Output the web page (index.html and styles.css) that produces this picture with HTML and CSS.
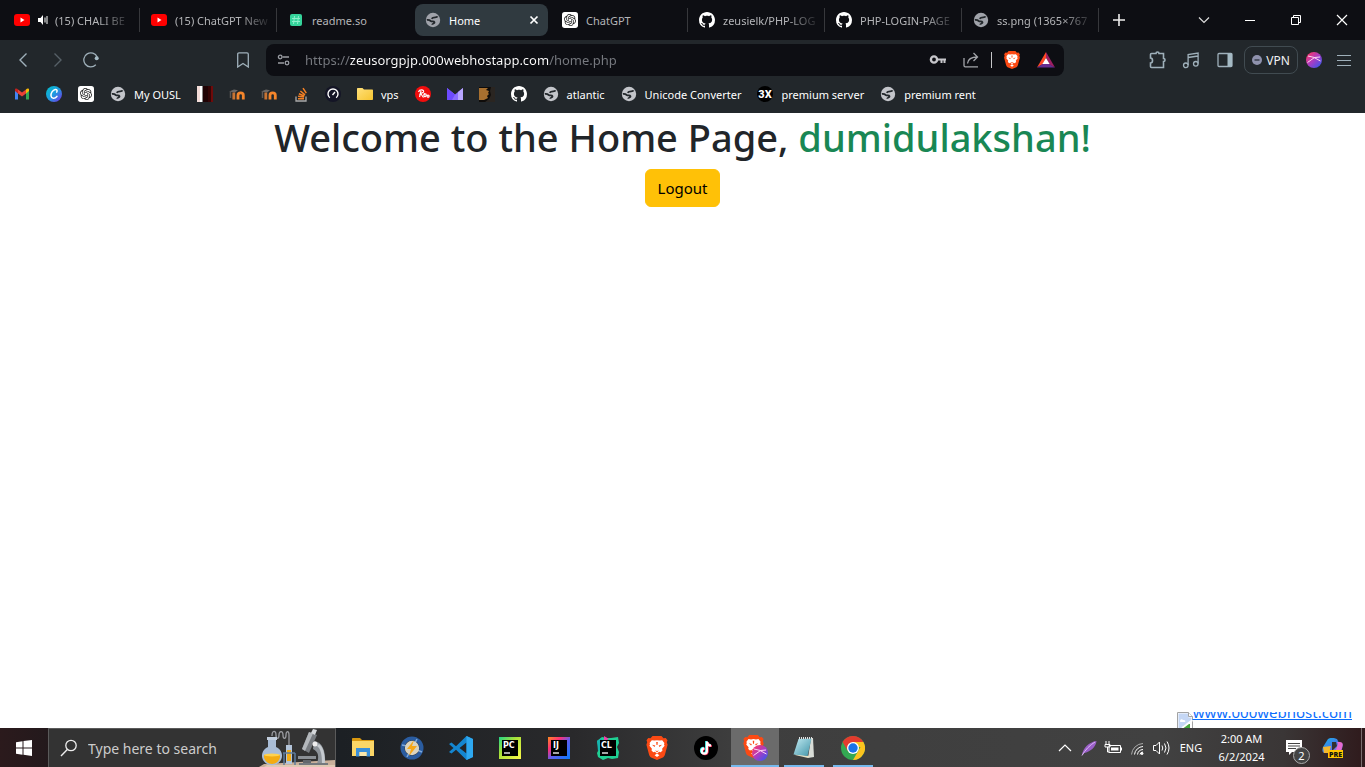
FILE: index.html
```html
<!DOCTYPE html>
<html lang="en">
<head>
<meta charset="utf-8">
<meta name="viewport" content="width=device-width, initial-scale=1">
<title>Home</title>
<link rel="stylesheet" href="styles.css">
</head>
<body>
<svg class="sprite" aria-hidden="true">
  <defs>
    <linearGradient id="gPurple" x1="0" y1="0" x2="1" y2="1"><stop offset=".1" stop-color="#f8386b"/><stop offset=".5" stop-color="#a83cc4"/><stop offset=".9" stop-color="#3f55ea"/></linearGradient>
    <linearGradient id="gCanva" x1="0" y1="0" x2="1" y2="1"><stop offset="0" stop-color="#00c4cc"/><stop offset=".5" stop-color="#1f9be0"/><stop offset="1" stop-color="#7d2ae8"/></linearGradient>
    <linearGradient id="gFolder" x1="0" y1="0" x2="1" y2="1"><stop offset="0" stop-color="#ffe07a"/><stop offset="1" stop-color="#f7c530"/></linearGradient>
    <linearGradient id="gPc" x1="0" y1="0" x2="1" y2="1"><stop offset="0" stop-color="#21d789"/><stop offset=".4" stop-color="#a8e038"/><stop offset="1" stop-color="#fcf84a"/></linearGradient>
    <linearGradient id="gIj" x1="0" y1="0" x2="1" y2="1"><stop offset="0" stop-color="#ff8a1f"/><stop offset=".3" stop-color="#fe2f78"/><stop offset=".55" stop-color="#5b5ff0"/><stop offset="1" stop-color="#087cfa"/></linearGradient>
    <linearGradient id="gCopilot" x1="0" y1="0" x2="1" y2="1"><stop offset="0" stop-color="#18b7e8"/><stop offset=".5" stop-color="#3f7be8"/><stop offset="1" stop-color="#e66ad0"/></linearGradient>
    <linearGradient id="gNote" x1="0" y1="0" x2="1" y2="1"><stop offset="0" stop-color="#c3ebf2"/><stop offset="1" stop-color="#3f93a8"/></linearGradient>
  </defs>
  <symbol id="youtube" viewBox="0 0 16 16"><rect y="2" width="16" height="12" rx="3" fill="#f00"/><path d="M6.500 5.500v5l4-2.500z" fill="#fff"/></symbol>
  <symbol id="globe" viewBox="0 0 16 16"><circle cx="8" cy="8" r="7.200" fill="currentColor"/><g fill="none" stroke="#22272b"><path d="M12.600 4.400C11.500 6.400 8.500 4.200 6.600 6.800" stroke-width="1.800"/><path d="M1.800 7.900c1.400-.2 2.900.1 3.900 1.100 1.300 1 3.300-.2 3.800 1.300.1 1.400-2.200 1-2.300 2.500" stroke-width="1.800"/></g></symbol>
  <symbol id="openai" viewBox="0 0 24 24"><rect width="24" height="24" rx="4" fill="#fff"/><path transform="translate(3 3) scale(.75)" fill="#222" d="M22.2819 9.8211a5.9847 5.9847 0 0 0-.5157-4.9108 6.0462 6.0462 0 0 0-6.5098-2.9A6.0651 6.0651 0 0 0 4.9807 4.1818a5.9847 5.9847 0 0 0-3.9977 2.9 6.0462 6.0462 0 0 0 .7427 7.0966 5.98 5.98 0 0 0 .511 4.9107 6.051 6.051 0 0 0 6.5146 2.9001A5.9847 5.9847 0 0 0 13.2599 24a6.0557 6.0557 0 0 0 5.7718-4.2058 5.9894 5.9894 0 0 0 3.9977-2.9001 6.0557 6.0557 0 0 0-.7475-7.0729zm-9.022 12.6081a4.4755 4.4755 0 0 1-2.8764-1.0408l.1419-.0804 4.7783-2.7582a.7948.7948 0 0 0 .3927-.6813v-6.7369l2.02 1.1686a.071.071 0 0 1 .038.052v5.5826a4.504 4.504 0 0 1-4.4945 4.4944zm-9.6607-4.1254a4.4708 4.4708 0 0 1-.5346-3.0137l.142.0852 4.783 2.7582a.7712.7712 0 0 0 .7806 0l5.8428-3.3685v2.3324a.0804.0804 0 0 1-.0332.0615L9.74 19.9502a4.4992 4.4992 0 0 1-6.1408-1.6464zM2.3408 7.8956a4.485 4.485 0 0 1 2.3655-1.9728V11.6a.7664.7664 0 0 0 .3879.6765l5.8144 3.3543-2.0201 1.1685a.0757.0757 0 0 1-.071 0l-4.8303-2.7865A4.504 4.504 0 0 1 2.3408 7.872zm16.5963 3.8558L13.1038 8.364 15.1192 7.2a.0757.0757 0 0 1 .071 0l4.8303 2.7913a4.4944 4.4944 0 0 1-.6765 8.1042v-5.6772a.79.79 0 0 0-.407-.667zm2.0107-3.0231l-.142-.0852-4.7735-2.7818a.7759.7759 0 0 0-.7854 0L9.409 9.2297V6.8974a.0662.0662 0 0 1 .0284-.0615l4.8303-2.7866a4.4992 4.4992 0 0 1 6.6802 4.66zM8.3065 12.863l-2.02-1.1638a.0804.0804 0 0 1-.038-.0567V6.0742a4.4992 4.4992 0 0 1 7.3757-3.4537l-.142.0805L8.704 5.459a.7948.7948 0 0 0-.3927.6813zm1.0976-2.3654l2.602-1.4998 2.6069 1.4998v2.9994l-2.5974 1.4997-2.6067-1.4997Z"/></symbol>
  <symbol id="github" viewBox="0 0 16 16"><path fill="#fff" d="M8 0c4.420 0 8 3.580 8 8a8.013 8.013 0 0 1-5.450 7.590c-.4.080-.550-.170-.550-.380 0-.270.010-1.130.010-2.200 0-.750-.250-1.230-.540-1.480 1.780-.2 3.650-.880 3.650-3.950 0-.880-.310-1.590-.820-2.150.080-.2.360-1.020-.080-2.120 0 0-.670-.220-2.200.820-.640-.180-1.320-.270-2-.270-.680 0-1.360.090-2 .270-1.530-1.030-2.200-.820-2.200-.820-.440 1.100-.160 1.920-.080 2.120-.510.560-.820 1.280-.820 2.150 0 3.060 1.860 3.750 3.640 3.950-.230.2-.440.550-.510 1.070-.460.210-1.610.550-2.330-.660-.150-.240-.6-.830-1.230-.820-.670.010-.270.380.010.530.340.190.730.9.820 1.130.160.450.680 1.310 2.690.940 0 .670.010 1.300.010 1.490 0 .210-.150.450-.550.380A7.995 7.995 0 0 1 0 8c0-4.420 3.580-8 8-8Z"/></symbol>
  <symbol id="brave" viewBox="0 0 24 24"><path fill="#fb4a14" d="M7.500 0h9l2 2.300 2.200-.3 1.800 2.300-.7 2 .8 2.500-2.700 10c-.3 1.200-1 2-2 2.700L12 24l-5.900-2.500c-1-.7-1.700-1.500-2-2.700L1.400 8.800l.8-2.500-.7-2L3.300 2l2.200.3z"/><path fill="#fff" d="M12 4.200l2.600.4 2.600-.4 2.200 2.800-.4 1.600.6 1.200-2.500 3 .4 1.700-1.800 1.800-1.500-.6-2.200 1.800-2.200-1.800-1.500.6-1.800-1.800.4-1.700-2.500-3 .6-1.200L4.600 7l2.200-2.800 2.600.4z"/><path fill="#fff" d="M12 17.600l2.400 1.600-2.400 1.900-2.400-1.900z"/><path fill="#fb4a14" d="M7 8.700l3.300.8-.8 1.500zM17 8.700l-3.300.8.8 1.500zM10 14.500l2 .6 2-.6-2 1.700zM11.200 6h1.600l-.3 3h-1z"/></symbol>
  <symbol id="moodle" viewBox="0 0 16 16"><path d="M0 5.500L5 3.500l4 .8-3 2.200z" fill="#6b6765"/><path d="M1.500 6v6" stroke="#5d5957" stroke-width="1.500"/><path d="M4.800 13.500V6.500" stroke="#c87434" stroke-width="2.800"/><path d="M9 13.500V9.200c0-3 5.300-3 5.300 0v4.300" fill="none" stroke="#f4852b" stroke-width="2.800"/></symbol>
  <symbol id="orb" viewBox="0 0 16 16"><circle cx="8" cy="8" r="8" fill="url(#gPurple)"/><path d="M2 4l6.500 1.500L14 5M8.500 5.500L1.500 10.500M8 5.500l6.500 3.500" fill="none" stroke="#ffd5f3"/></symbol>
</svg>

<header class="browser">
  <nav class="tabs" aria-label="Tabs">
    <button class="tab"><svg class="i16"><use href="#youtube"/></svg><svg class="sound" viewBox="0 0 12 12"><path d="M1 4h2.500L6 1v10L3.500 8H1z" fill="#fff"/><path d="M8 3.500v5M10 2v8" stroke="#fff"/></svg><span class="tab-title fade">(15) CHALI BE</span></button>
    <button class="tab"><svg class="i16"><use href="#youtube"/></svg><span class="tab-title fade">(15) ChatGPT New</span></button>
    <button class="tab before-active"><svg class="i16" viewBox="0 0 16 16"><rect x="2" y="2" width="12" height="12" rx="2" fill="#35d49b"/><path d="M6.500 4L5.500 12M10.500 4l-1 8M4 6.500h8M4 9.500h8" stroke="#8df0cb"/></svg><span class="tab-title">readme.so</span></button>
    <button class="tab active" aria-current="page"><svg class="i16"><use href="#globe"/></svg><span class="tab-title">Home</span><svg class="tab-close" viewBox="0 0 10 10"><path d="M1.500 1.500l7 7M8.500 1.500l-7 7" stroke="#fff" stroke-width="1.700"/></svg></button>
    <button class="tab"><svg class="i16"><use href="#openai"/></svg><span class="tab-title">ChatGPT</span></button>
    <button class="tab"><svg class="i16"><use href="#github"/></svg><span class="tab-title fade">zeusielk/PHP-LOG</span></button>
    <button class="tab"><svg class="i16"><use href="#github"/></svg><span class="tab-title fade">PHP-LOGIN-PAGE</span></button>
    <button class="tab"><svg class="i16"><use href="#globe"/></svg><span class="tab-title fade">ss.png (1365×767</span></button>
    <button class="new-tab" aria-label="New tab"><svg class="i12" viewBox="0 0 12 12"><path d="M6 0v12M0 6h12" stroke="#eee" stroke-width="1.600"/></svg></button>
    <div class="window-controls">
      <button aria-label="Search tabs"><svg class="i12" viewBox="0 0 12 12"><path d="M1 3.500l5 5 5-5" fill="none" stroke="#ddd" stroke-width="1.200"/></svg></button>
      <button aria-label="Minimize"><svg class="i12" viewBox="0 0 12 12"><path d="M1 6.500h10" stroke="#fff"/></svg></button>
      <button aria-label="Restore"><svg class="i12" viewBox="0 0 12 12"><path d="M1.500 3.500h7v7h-7zM3.500 3.500v-2h7v7h-2" fill="none" stroke="#fff"/></svg></button>
      <button aria-label="Close"><svg class="i12" viewBox="0 0 12 12"><path d="M1 1l10 10M11 1L1 11" stroke="#fff" stroke-width="1.200"/></svg></button>
    </div>
  </nav>

  <div class="toolbar">
    <div class="nav-group">
      <button class="tool" aria-label="Back"><svg class="i16" viewBox="0 0 16 16"><path d="M11.500 1.500L5 8l6.500 6.500" fill="none" stroke="#9fb0ba" stroke-width="1.400"/></svg></button>
      <button class="tool" aria-label="Forward"><svg class="i16" viewBox="0 0 16 16"><path d="M5.500 1.500L12 8l-6.500 6.500" fill="none" stroke="#566067" stroke-width="1.400"/></svg></button>
      <button class="tool" aria-label="Reload"><svg class="i16" viewBox="0 0 16 16"><path d="M12.800 12.800A7 7 0 1 1 14.200 5" fill="none" stroke="#9fb0ba" stroke-width="1.300"/><circle cx="13.700" cy="6.300" r="2" fill="#a5bac4"/></svg></button>
      <button class="tool push" aria-label="Bookmark this page"><svg class="i16" viewBox="0 0 16 16"><path d="M2.700 2.200c0-.8.500-1.300 1.300-1.300h8c.8 0 1.300.5 1.300 1.300V15L8 11.500 2.700 15z" fill="none" stroke="#9fb0ba" stroke-width="1.300"/></svg></button>
    </div>
    <div class="address">
      <button class="bare" aria-label="Site settings"><svg class="i16" viewBox="0 0 16 16" fill="none" stroke="#9a9da3" stroke-width="1.300"><circle cx="4.200" cy="5" r="1.800"/><path d="M6.500 5H13M2 11h6"/><circle cx="11" cy="11" r="1.800"/></svg></button>
      <input class="url" type="text" aria-label="Address" value="https://zeusorgpjp.000webhostapp.com/home.php" spellcheck="false">
      <button class="bare" aria-label="Passwords"><svg class="i18" viewBox="0 0 18 18"><circle cx="5" cy="8.500" r="3.100" fill="none" stroke="#c6c6ca" stroke-width="2.400"/><path d="M8 8.500h9M12.500 8.500V12M15.500 8.500V12" fill="none" stroke="#c6c6ca" stroke-width="2"/></svg></button>
      <button class="bare" aria-label="Share"><svg class="i16" viewBox="0 0 16 16" fill="none" stroke="#a3a5aa" stroke-width="1.300"><path d="M1 6v7.500c0 .8.500 1.300 1.300 1.300H15M4.500 11.500C5 7 8 5 14.500 5M10.500 1l4 4-4 4"/></svg></button>
      <span class="divider"></span>
      <button class="bare" aria-label="Brave Shields"><svg class="i18"><use href="#brave"/></svg></button>
      <button class="bare" aria-label="Brave Rewards"><svg class="i18" viewBox="0 0 18 18"><path d="M9 1L0 16.500 6 13 9 7z" fill="#ff4724"/><path d="M0 16.500h18L12.500 13h-7z" fill="#662d91"/><path d="M9 1l9 15.500L12 13 9 7z" fill="#9e1f63"/><path d="M9 7l3.600 6H5.400z" fill="#fff"/></svg></button>
    </div>
    <div class="tools-group">
      <button class="tool" aria-label="Extensions"><svg class="i18" viewBox="0 0 18 18"><path d="M3.500 2.500H8c0-2 3-2 3 0h4.500v5c2 0 2 3 0 3v6h-12q-1 0-1-1V12c2.700 0 2.700-5 0-5V3.500q0-1 1-1z" fill="none" stroke="#9fb0ba" stroke-width="1.600"/></svg></button>
      <button class="tool" aria-label="Media"><svg class="i18" viewBox="0 0 18 18" fill="none" stroke="#9fb0ba" stroke-width="1.300"><circle cx="3.800" cy="14.300" r="2.300"/><circle cx="13.800" cy="12.800" r="2.300"/><path d="M6.100 14V3.500l10-1.500v10.500M6.100 6.500l10-1.500"/></svg></button>
      <button class="tool" aria-label="Side panel"><svg class="i16" viewBox="0 0 16 16"><rect x="1" y="1.500" width="14" height="13" rx="1" fill="none" stroke="#9fb0ba" stroke-width="1.300"/><path d="M10.500 1.500H15v13h-4.500z" fill="#a5bac4"/></svg></button>
      <button class="vpn"><svg class="i10" viewBox="0 0 10 10"><circle cx="5" cy="5" r="5" fill="#8f92ad"/><path d="M2.500 5h5" stroke="#333846" stroke-width="1.400"/></svg>VPN</button>
      <button class="bare" aria-label="Profile"><svg class="i16"><use href="#orb"/></svg></button>
      <button class="bare menu-btn" aria-label="Menu"><svg class="i14" viewBox="0 0 14 14"><path d="M0 2.500h14M0 7.500h14M0 12.500h14" stroke="#9fb0ba" stroke-width="1.200"/></svg></button>
    </div>
  </div>

  <nav class="bookmarks" aria-label="Bookmarks">
    <a href="#" aria-label="Gmail"><svg class="i16" viewBox="0 0 16 16"><path d="M1 4v9.500h3V7z" fill="#4285f4"/><path d="M15 4v9.500h-3V7z" fill="#34a853"/><path d="M4 3.500v4l4 3 4-3v-4l-4 3z" fill="#ea4335"/><path d="M1 5V3.500C1 2 3 2 4 3.500v4z" fill="#c5221f"/><path d="M15 5V3.500c0-1.500-2-1.500-3 0v4z" fill="#fbbc04"/></svg></a>
    <a href="#" aria-label="Canva"><svg class="i16" viewBox="0 0 16 16"><circle cx="8" cy="8" r="8" fill="url(#gCanva)"/><path d="M10.700 6.200c.9-1.400.2-3-1.500-2.700C6.600 4 4.700 7.200 5 9.900c.4 2.800 3.700 3.100 5.900.5" fill="none" stroke="#fff" stroke-width="1.500" stroke-linecap="round"/></svg></a>
    <a href="#" aria-label="ChatGPT"><svg class="i16"><use href="#openai"/></svg></a>
    <a href="#"><svg class="i16 globe"><use href="#globe"/></svg>My OUSL</a>
    <a href="#" aria-label="Stripes"><svg class="i16" viewBox="0 0 16 16"><path d="M0 0h5v16H0z" fill="#f3dcd8"/><path d="M3 0h2v16H3z" fill="#fff"/><path d="M5 0h1v16H5z" fill="#888"/><path d="M6 0h5v16H6z" fill="#1f0305"/><path d="M11 0h3v16h-3z" fill="#330506"/><path d="M14 0h2v16h-2z" fill="#6f0a0a"/></svg></a>
    <a href="#" aria-label="Moodle"><svg class="i16"><use href="#moodle"/></svg></a>
    <a href="#" aria-label="Moodle"><svg class="i16"><use href="#moodle"/></svg></a>
    <a href="#" aria-label="Stack Overflow"><svg class="i16" viewBox="0 0 16 16"><path d="M3 10.500v4.500h10v-4.500" fill="none" stroke="#aaa" stroke-width="1.300"/><path d="M5 12.700h6M5.100 10.300l6 .8M5.900 7.700l5.500 2.300M7.400 5l4.600 3.800M10 2.200l3.300 5" stroke="#f48024" stroke-width="1.500"/></svg></a>
    <a href="#" aria-label="Speed test"><svg class="i16" viewBox="0 0 16 16"><circle cx="8" cy="8" r="8" fill="#141526"/><path d="M4.800 11.800a5 5 0 1 1 6.400 0M7.500 9L10 6" fill="none" stroke="#fff" stroke-width="1.400"/></svg></a>
    <a href="#"><svg class="i16" viewBox="0 0 16 16"><path d="M0 3c0-.8.400-1 1-1h4.500L7 3.500h8c.6 0 1 .3 1 1V13c0 .7-.4 1-1 1H1c-.6 0-1-.3-1-1z" fill="url(#gFolder)"/></svg>vps</a>
    <a href="#" aria-label="Robi"><svg class="i16" viewBox="0 0 16 16"><circle cx="8" cy="8" r="8" fill="#f20d0d"/><path d="M3.500 6c1-3 6-2.500 5 0-.5 1-3 1-4 2.500M6 5L4.500 11M6 8l2.500 3.500M9.500 7c-2 3 1 5 1.500 2.500s-1-2-2-.5M12.500 9c-1.500 2 1 3 1.500 1.500S13 9 12.500 9" fill="none" stroke="#fff" stroke-width="1.200"/></svg></a>
    <a href="#" aria-label="Proton Mail"><svg class="i16" viewBox="0 0 16 16"><path d="M0 2l8 6.500L16 2v12H0z" fill="#8a6cff"/><path d="M0 2l8 6.500L5 14H0z" fill="#6d4aff"/><path d="M11 6l5-4v12h-5z" fill="#b8a5ff"/></svg></a>
    <a href="#" aria-label="Script"><svg class="i16" viewBox="0 0 16 16"><path d="M0 1h16v15H0z" fill="#2a2521"/><path d="M0 1h12l-1 4 1 4-2 4-4 3H0z" fill="#0f0c0a"/><path d="M0 2h9l-2 2 3 1-1 2 1 1-2 2 1 2-4 2H0z" fill="#a8702f"/></svg></a>
    <a href="#" aria-label="GitHub"><svg class="i16"><use href="#github"/></svg></a>
    <a href="#"><svg class="i16 globe"><use href="#globe"/></svg>atlantic</a>
    <a href="#"><svg class="i16 globe"><use href="#globe"/></svg>Unicode Converter</a>
    <a href="#"><svg class="i16" viewBox="0 0 16 16"><circle cx="8" cy="8" r="8" fill="#000"/><text x="8" y="12" text-anchor="middle" font-family="Roboto, sans-serif" font-size="11" font-weight="800" fill="#fff">3X</text></svg>premium server</a>
    <a href="#"><svg class="i16 globe"><use href="#globe"/></svg>premium rent</a>
  </nav>
</header>

<main class="page">
  <h1 class="welcome">Welcome to the Home Page, <span class="user">dumidulakshan!</span></h1>
  <button class="logout">Logout</button>
  <a class="host-badge" href="#"><svg class="i16" viewBox="0 0 16 16"><path d="M.5 16V.5h11l4 4V16" fill="#fff" stroke="#a3a3a3"/><path d="M1.500 1.500h10v4h3v4L5 16H1.500z" fill="#c5d7f5"/><path d="M3 9c0-2 2.500-2.500 3-1 2-.5 3 1 2 2H4c-.8 0-1-.5-1-1z" fill="#fff"/><path d="M11.500.5v4h4" fill="#fff" stroke="#a3a3a3"/><path d="M5 16c2-3.500 4-4.500 8-4v4z" fill="#46a53c"/><path d="M15.500 8L5 16" stroke="#fff" stroke-width="2"/></svg><span class="host-text">www.000webhost.com</span></a>
</main>

<footer class="taskbar">
  <button class="start" aria-label="Start"><svg class="i16" viewBox="0 0 16 16"><path d="M0 2.200L6.500 1.300v6.200H0zM7.500 1.100L16 0v7.500H7.500zM0 8.500h6.500v6.200L0 13.800zM7.500 8.500H16V16l-8.500-1.200z" fill="#fff"/></svg></button>
  <label class="search">
    <svg class="i18" viewBox="0 0 18 18"><circle cx="11" cy="6.500" r="5.200" fill="none" stroke="#eee" stroke-width="1.300"/><path d="M7.300 10.400L1 17" stroke="#eee" stroke-width="1.400"/></svg>
    <input class="search-input" type="text" placeholder="Type here to search" aria-label="Type here to search">
    <svg class="science" viewBox="0 0 76 38"><path d="M0 38l5-3 71-4v7z" fill="#c9b09b"/><path d="M5 38l3-2h68v2z" fill="#e0c9b4"/><path d="M13 7c0-6 4-6 4-1s3 4 3 0 4-5 4 0 3 4 3 0 3-5 3 0v10" fill="none" stroke="#9a9ba0" stroke-width="1.300"/><path d="M9 10h8v8a10 9.500 0 1 1-8 0z" fill="#a9bdd6"/><path d="M8 8h10v3H8z" fill="#c3cfde"/><path d="M5 26h16c1 4-3 9-8 9s-9-5-8-9z" fill="#f3ac13"/><ellipse cx="13" cy="26" rx="8" ry="1.500" fill="#ffd24e"/><path d="M27 16h6v19h-6z" fill="#b3c4d9"/><path d="M28 21h4v11h-4z" fill="#f3ac13"/><path d="M24 24h12M25 24v12M36 24v12" stroke="#5d7c9d" stroke-width="1.500"/><path d="M55 12c8 1 12 9 11 23h-8c2-7 2-12-4-15z" fill="#8d9399"/><path d="M60 15c4 3 6 9 6 20h-3c0-9-1-15-5-18z" fill="#c6cbd0"/><path d="M50 3l8 3-8 18-7-4z" fill="#777b80"/><path d="M50 3l4 1.500L46 22l-3-2z" fill="#b3b7bb"/><path d="M54 0l4 1-2 5-4-2z" fill="#d5d8db"/><circle cx="56" cy="15" r="2.500" fill="#eee"/><path d="M39 27h18v3H39z" fill="#8b9095"/><path d="M44 31h8v3h-8z" fill="#62676c"/><path d="M40 34h29v2H40z" fill="#74797e"/></svg>
  </label>
  <div class="apps">
    <button class="app" aria-label="File Explorer"><svg class="i24" viewBox="0 0 24 24"><path d="M1 3c0-1 .5-1 1-1h7l2 2h12v4H1z" fill="#d9980f"/><path d="M1 5h22v15H1z" fill="#fbd667"/><path d="M5 12h14v8.500h-3.500V16h-7v4.500H5z" fill="#3a8fd9"/><path d="M8.500 16h7v4h-7z" fill="#fbe7ab"/></svg></button>
    <button class="app" aria-label="Power app"><svg class="i24" viewBox="0 0 24 24"><circle cx="12" cy="12" r="9.500" fill="none" stroke="#2a5ca0" stroke-width="4"/><path d="M2 9l5 1M17 3l-2 4M22 16l-5-2M7 21l2-4" stroke="#7fa8d8" stroke-width="1.500"/><circle cx="12" cy="12" r="7.200" fill="#d9d3c0"/><path d="M14 4l-7 9h4l-2 7 8-10h-5z" fill="#f6a818"/></svg></button>
    <button class="app" aria-label="Visual Studio Code"><svg class="i24" viewBox="0 0 24 24"><path d="M17.500 0L24 3v18l-6.500 3L7 13.800 2.500 17.500 0 16l4.500-4L0 8l2.500-1.500L7 10.200zM17.500 6.500L10.500 12l7 5.500z" fill="#1486d0"/><path d="M17.500 0L24 3v18l-6.500 3z" fill="#2ea8f0"/></svg></button>
    <button class="app" aria-label="PyCharm"><svg class="i24" viewBox="0 0 24 24"><path d="M1 1h22v22H1z" fill="url(#gPc)"/><path d="M4 4h16v16H4z" fill="#000"/><path d="M6 17h6" stroke="#ddd" stroke-width="1.500"/><text x="5" y="12" class="jb">PC</text></svg></button>
    <button class="app" aria-label="IntelliJ IDEA"><svg class="i24" viewBox="0 0 24 24"><path d="M1 1h22v22H1z" fill="url(#gIj)"/><path d="M4 4h16v16H4z" fill="#000"/><path d="M6 17h6" stroke="#ddd" stroke-width="1.500"/><text x="6" y="12" class="jb">IJ</text></svg></button>
    <button class="app" aria-label="CLion"><svg class="i24" viewBox="0 0 24 24"><path d="M1 5l5-4 5 1 4 0 7-1 1 6-2 4 2 5-1 6-6 1-4-1-5 2-5-3-1-4 2-4z" fill="#1fd092"/><path d="M1 5l4-3 2 4-2 7-3 2z" fill="#16b5b0"/><path d="M8 0l5 3-5 2z" fill="#ef3fa8"/><path d="M4 4h16v16H4z" fill="#000"/><path d="M6 17h6" stroke="#ddd" stroke-width="1.500"/><text x="5" y="12" class="jb">CL</text></svg></button>
    <button class="app" aria-label="Brave"><svg class="i24"><use href="#brave"/></svg></button>
    <button class="app" aria-label="TikTok"><svg class="i24" viewBox="0 0 24 24"><circle cx="12" cy="12" r="12" fill="#000"/><g fill="none" stroke-width="2.200"><path d="M12.200 5v9.500a2.600 2.600 0 1 1-2.600-2.600M12.200 5.500c.3 2 2 3.500 4.200 3.500" stroke="#25f4ee"/><path d="M13.600 6v9.500a2.600 2.600 0 1 1-2.600-2.600M13.600 6.500c.3 2 2 3.500 4.200 3.500" stroke="#fe2c55"/><path d="M12.900 5.500V15a2.600 2.600 0 1 1-2.600-2.600M12.900 6c.3 2 2 3.500 4.200 3.500" stroke="#fff"/></g></svg></button>
    <button class="app focused" aria-label="Brave, running"><svg class="i26" viewBox="0 0 26 26"><use href="#brave" width="23" height="23"/><use href="#orb" x="10" y="10" width="16" height="16"/></svg></button>
    <button class="app running" aria-label="Notepad"><svg class="i24" viewBox="0 0 24 24"><path d="M19 2h2l1 19-6 1z" fill="#d8dcd6"/><path d="M3 19l13 3 2-2-14-2z" fill="#e6dfc4"/><path d="M6.500 3L19.500 2.500 15.500 20 1.500 18.500z" fill="url(#gNote)"/><path d="M7 2l13 0" stroke="#e3e3e3" stroke-width="2" stroke-dasharray="1 1"/></svg></button>
    <button class="app running" aria-label="Chrome"><svg class="i24" viewBox="0 0 24 24"><circle cx="12" cy="12" r="12" fill="#33a852"/><path d="M12 24l5.200-9L22.400 6A12 12 0 0 1 12 24zM12 6h10.400v5H12z" fill="#fcc31e"/><path d="M1.600 6a12 12 0 0 1 20.800 0H12l-5.200 9z" fill="#e33b2e"/><circle cx="12" cy="12" r="6" fill="#fff"/><circle cx="12" cy="12" r="4.700" fill="#1a73e8"/></svg></button>
  </div>
  <div class="tray">
    <button class="tray-icon" aria-label="Show hidden icons"><svg class="i14" viewBox="0 0 14 14"><path d="M1 10l6-6 6 6" fill="none" stroke="#fff" stroke-width="1.200"/></svg></button>
    <button class="tray-icon" aria-label="Feather"><svg class="i16" viewBox="0 0 16 16"><path d="M1 15C2 8 8 2 15.500 1 15 7 9 12 3 13z" fill="#9a5fc8"/><path d="M1 15.500C4 10 9 5 14 2" stroke="#dbb8f5" fill="none"/></svg></button>
    <button class="tray-icon" aria-label="Battery"><svg class="i18" viewBox="0 0 18 18"><path d="M5 6.500h11.500v7H5z" fill="none" stroke="#fff"/><path d="M7 8.500h7.500v3H7z" fill="#fff"/><path d="M17.500 8.500v3M2 2v3M5 2v3M1 5.500h5v2.500H1zM3.500 8v5H5" fill="none" stroke="#fff"/></svg></button>
    <button class="tray-icon" aria-label="Network"><svg class="i16" viewBox="0 0 16 16" fill="none" stroke="#fff"><path d="M2.500 14.500A12 12 0 0 1 14 3.500" stroke="#aaa"/><path d="M5.500 14.500A9 9 0 0 1 14 6.500M8.500 14.500a6 6 0 0 1 5.500-5M11 14.500a3 3 0 0 1 3-2.500"/><circle cx="13" cy="13.500" r="1" fill="#fff"/></svg></button>
    <button class="tray-icon" aria-label="Volume"><svg class="i18" viewBox="0 0 18 18" fill="none" stroke="#fff"><path d="M1.500 6.500h2.500l3.500-3.500v12L4 11.500H1.500zM10 6.500q1.500 2.500 0 5M12.500 4.500q3 4.500 0 9M15 2.500q4 6.500 0 13"/></svg></button>
    <button class="lang">ENG</button>
    <button class="clock"><time>2:00 AM</time><time>6/2/2024</time></button>
    <button class="notes" aria-label="Notifications, 2"><svg class="i18" viewBox="0 0 18 18"><path d="M1 1h16v12H7l-3 3v-3H1z" fill="#fff"/><path d="M3 4.500h12M3 7h12M3 9.500h8" stroke="#444"/></svg><span class="count">2</span></button>
    <button class="copilot" aria-label="Copilot"><svg class="i22" viewBox="0 0 22 22"><path d="M6 2c1-1.500 7-1.500 9 0l2 4h2c2 0 2 2 1.500 4L19 15H8L2 16c-2-1-2-3-1-6z" fill="url(#gCopilot)"/><path d="M1 10l1 6h5l2-7z" fill="#f4b731"/><path d="M15 5h3c3 0 3 3 2 5l-1 3h-5l2-6z" fill="#e66ad0"/><path d="M10 5l4 0 1 4-5 5z" fill="#323031"/><path d="M6 13h15v8H6z" fill="#ffc400"/><text x="13.500" y="19.500" text-anchor="middle" font-family="Open Sans, sans-serif" font-size="7" font-weight="800" fill="#111">PRE</text></svg></button>
    <button class="show-desktop" aria-label="Show desktop"></button>
  </div>
</footer>
</body>
</html>
```

FILE: styles.css
```css
* { box-sizing: border-box; }

body {
  margin: 0;
  min-height: 100vh;
  display: flex;
  flex-direction: column;
  background: #fff;
  font-family: "Noto Sans", "Open Sans", sans-serif;
  font-size: 11px;
}

button {
  margin: 0;
  padding: 0;
  border: 0;
  background: none;
  color: inherit;
  font: inherit;
}

svg { display: block; flex: none; }
.sprite { position: absolute; width: 0; height: 0; }
.i10 { width: 10px; height: 10px; }
.i12 { width: 12px; height: 12px; }
.i14 { width: 14px; height: 14px; }
.i16 { width: 16px; height: 16px; }
.i18 { width: 18px; height: 18px; }
.i22 { width: 22px; height: 22px; }
.i24 { width: 24px; height: 24px; }
.i26 { width: 26px; height: 26px; }

/* Browser chrome */
.browser { background: #22272b; color: #f1f2f4; }

.tabs {
  display: flex;
  align-items: center;
  height: 40px;
  padding-left: 3px;
  background: #0d0e13;
}

.tab {
  flex: 0 1 137px;
  min-width: 0;
  display: flex;
  align-items: center;
  gap: 8px;
  height: 24px;
  padding: 0 8px 0 11px;
  border-right: 1px solid #37383c;
  color: #b4b5b8;
  text-align: left;
}

.tab-title {
  flex: 1;
  min-width: 0;
  overflow: hidden;
  white-space: nowrap;
}

.fade { mask-image: linear-gradient(to right, #000 64px, transparent 98px); }

.sound + .fade { mask-image: linear-gradient(to right, #000 44px, transparent 78px); }

.tab.before-active { border-color: transparent; }
.tab .i16 { color: #a0a3aa; }

.tab.active {
  flex-basis: 133px;
  height: 32px;
  margin: 0 3px 0 1px;
  padding: 0 9px 0 10px;
  border: 0;
  border-radius: 8px;
  background: #303a40;
  color: #fff;
}

.tab-close { width: 10px; height: 10px; }
.sound { width: 12px; height: 12px; margin: 0 -2px 0 -1px; }
.new-tab { display: grid; place-items: center; width: 40px; height: 40px; }
.window-controls { display: flex; margin-left: auto; }
.window-controls button { display: grid; place-items: center; width: 46px; height: 40px; }

.toolbar {
  display: grid;
  grid-template-columns: 266px 1fr 301px;
  align-items: center;
  height: 40px;
}

.nav-group, .tools-group { display: flex; align-items: center; }
.nav-group { padding: 0 6px; }
.tool { display: grid; place-items: center; width: 34px; height: 32px; }
.push { margin-left: auto; }

.address {
  display: flex;
  align-items: center;
  height: 32px;
  padding: 0 9px 0 10px;
  border-radius: 8px;
  background: #0d0e13;
}

.url {
  flex: 1;
  min-width: 0;
  height: 24px;
  margin-left: 13px;
  padding: 0;
  border: 0;
  outline: 0;
  font: 13px "Noto Sans", "Open Sans", sans-serif;
  color: transparent;
  background: linear-gradient(to right, #777a80 45px, #fff 45px, #fff 244px, #777a80 244px);
  background-clip: text;
}

.bare { display: grid; place-items: center; }
.address .bare + .bare { margin-left: 16px; }
.divider { width: 1px; height: 16px; margin: 0 11px 0 12px; background: #c5c6c9; }

.tools-group { justify-content: flex-end; padding-right: 14px; }

.vpn {
  display: flex;
  align-items: center;
  justify-content: center;
  gap: 4px;
  width: 54px;
  height: 28px;
  margin: 0 8px 0 2px;
  border: 1px solid #414b51;
  border-radius: 8px;
  font-size: 12px;
}

.menu-btn { margin-left: 15px; }

.bookmarks {
  display: flex;
  align-items: center;
  height: 33px;
  padding: 0 6px 5px;
}

.bookmarks a {
  display: flex;
  align-items: center;
  gap: 8px;
  padding: 0 8px;
  color: #fff;
  text-decoration: none;
  white-space: nowrap;
}

.globe { color: #c3c5ca; }

/* Page */
.page {
  position: relative;
  flex: 1;
  display: flex;
  flex-direction: column;
  align-items: center;
}

.welcome {
  margin: 0 0 8px;
  color: #212529;
  font-size: 38px;
  font-weight: 500;
  line-height: 48px;
  text-align: center;
}

.user { color: #198754; }

.logout {
  padding: 6px 12px;
  border: 1px solid #ffc107;
  border-radius: 6px;
  background: #ffc107;
  color: #000;
  font-size: 15px;
  line-height: 24px;
}

.host-badge {
  position: absolute;
  right: 13px;
  bottom: 0;
  display: flex;
  height: 16px;
  overflow: hidden;
  color: #0d6efd;
  font-size: 15px;
  line-height: 0;
}

.host-text { text-decoration: underline; }

/* Taskbar */
.taskbar {
  display: flex;
  height: 39px;
  color: #fff;
  background: linear-gradient(to right, #2b1a1c 0, #22191c 4%, #1c2024 25%, #29292b 42%, #3e3e3e 54%, #414141 85%, #3a3636 94%, #2f1a1c 100%);
}

.start { display: grid; place-items: center; width: 48px; }

.search {
  display: flex;
  align-items: center;
  width: 288px;
  padding-left: 11px;
  border: 1px solid #5a5a5a;
  border-bottom: 0;
  background: #333;
}

.search-input {
  flex: 1;
  min-width: 0;
  margin-left: 10px;
  padding: 0;
  border: 0;
  outline: 0;
  background: none;
  color: #ccc;
  font: 14px "Noto Sans", "Open Sans", sans-serif;
}

.search-input::placeholder { color: #ccc; opacity: 1; }
.science { width: 76px; height: 38px; }

.apps { display: flex; gap: 1px; margin-left: 3px; }
.app { display: grid; place-items: center; width: 48px; }
.focused { background: #6b6b6b; box-shadow: inset 0 -2px #76b9ed; }

.running {
  background: linear-gradient(#76b9ed, #76b9ed) center bottom / 40px 2px no-repeat;
}

.jb { fill: #fff; font: 800 8px "DejaVu Sans", sans-serif; }

.tray { display: flex; margin-left: auto; }
.tray-icon { display: grid; place-items: center; width: 24px; }
.lang { width: 36px; }

.clock {
  display: flex;
  flex-direction: column;
  align-items: center;
  justify-content: center;
  width: 65px;
  line-height: 18px;
}

.notes { position: relative; display: grid; place-items: center; width: 40px; }

.count {
  position: absolute;
  right: 4px;
  bottom: 3px;
  width: 17px;
  border: 1px solid #aaa;
  border-radius: 50%;
  background: #444;
  font-size: 11px;
  line-height: 15px;
}

.copilot { display: grid; place-items: center; width: 38px; }
.show-desktop { width: 4px; margin-left: 9px; border-left: 1px solid #7a6d6e; }
```
